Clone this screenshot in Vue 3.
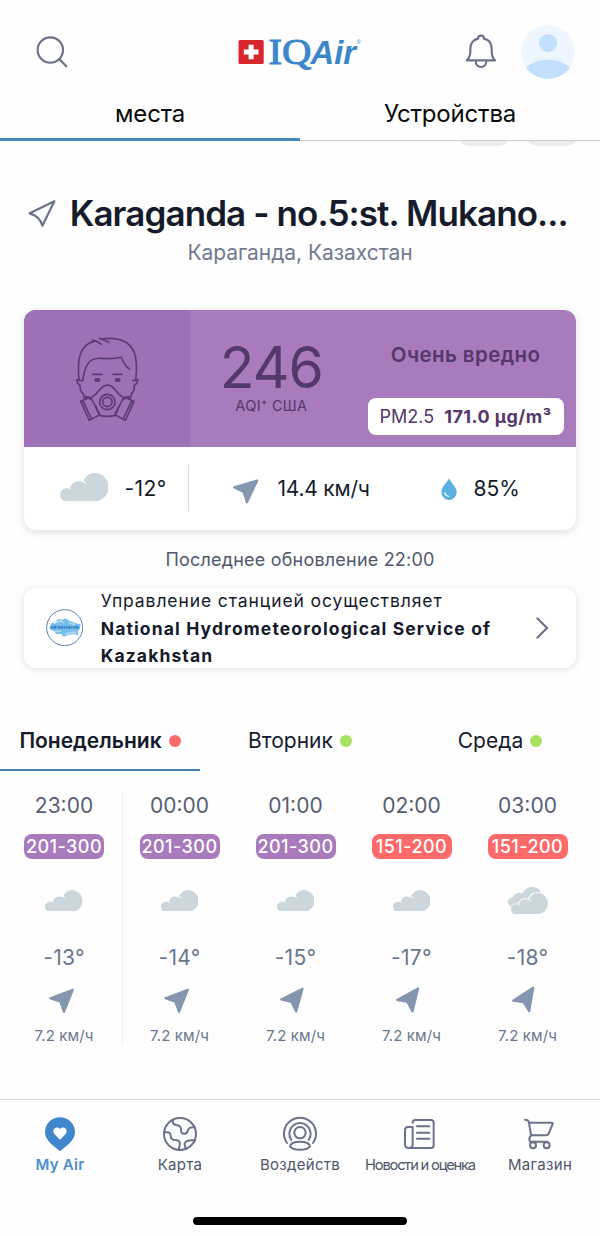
<script setup>
import { ref } from 'vue';

const cloudPath = 'M6.5 28.3C2.8 28.3 0 25.5 0 21.8C0 18 3 15.3 6.6 15.3C8.5 15.3 10 16 11.5 17.5C11.3 16.5 10.7 15.8 9.9 15C11.5 10.8 14.6 8.3 18.5 8.3C22 8.3 24.5 9.6 27 12C26.6 10.2 25.3 8.8 23.5 7.7C25.8 2.8 30 0 34.6 0C42.4 0 48.6 6.3 48.6 14.2C48.6 22 42.4 28.3 34.6 28.3Z';

const activeDay = ref(0);

const days = [
  { name: 'Понедельник', level: 'red' },
  { name: 'Вторник', level: 'green' },
  { name: 'Среда', level: 'green' },
];

const hours = [
  { time: '23:00', aqi: '201-300', level: 'purple', sky: 'cloud', temp: '-13°', wind: '7.2 км/ч', angle: 0 },
  { time: '00:00', aqi: '201-300', level: 'purple', sky: 'cloud', temp: '-14°', wind: '7.2 км/ч', angle: 0 },
  { time: '01:00', aqi: '201-300', level: 'purple', sky: 'cloud', temp: '-15°', wind: '7.2 км/ч', angle: -6 },
  { time: '02:00', aqi: '151-200', level: 'red', sky: 'cloud', temp: '-17°', wind: '7.2 км/ч', angle: -8 },
  { time: '03:00', aqi: '151-200', level: 'red', sky: 'cloudy', temp: '-18°', wind: '7.2 км/ч', angle: -12 },
];
</script>

<template>
  <div class="screen">
    <header class="header">
      <svg class="search" viewBox="108 108 96 96">
        <circle cx="151" cy="150" r="38" />
        <path d="M178 178L199 199" />
      </svg>
      <svg class="logo" viewBox="0 0 126 42">
        <rect x="0.5" y="4" width="25.2" height="24" rx="1.5" fill="#d9272e" />
        <path d="M13.1 8.7V23.3M5.8 16H20.5" stroke="#fff" stroke-width="5" />
        <text class="logo-iq" x="30.5" y="28" textLength="43" lengthAdjust="spacingAndGlyphs">IQ</text>
        <text class="logo-air" x="72.5" y="28" textLength="45.5" lengthAdjust="spacingAndGlyphs">Air</text>
        <text class="logo-reg" x="118.5" y="8">®</text>
      </svg>
      <svg class="bell" viewBox="495 102 96 108">
        <path d="M500 181C509 174 511 166 511 152V146C511 130 521 119 534 116C534 104 552 104 552 116C566 119 575 130 575 146V152C575 166 577 174 585 181ZM527 183C527 207 559 207 559 183" />
      </svg>
      <svg class="avatar" viewBox="0 0 54 54">
        <circle cx="27" cy="27" r="27" fill="#edf6ff" />
        <circle cx="27" cy="18" r="9" fill="#c2e0fc" />
        <path d="M5 42.5C11 37.5 18.5 34.5 27 34.5S43 37.5 49 42.5A27 27 0 0 1 5 42.5Z" fill="#c2e0fc" />
      </svg>
    </header>

    <nav class="tabs">
      <div class="tab tab-active"><span>места</span></div>
      <div class="tab"><span>Устройства</span></div>
    </nav>

    <div class="chips"><i></i><i></i></div>

    <section class="place">
      <h1>
        <svg viewBox="86 56 86 86"><path d="M91 99L165 63L129 136C124 117 112 105 91 99Z" /></svg>
        <span>Karaganda - no.5:st. Mukano...</span>
      </h1>
      <p>Караганда, Казахстан</p>
    </section>

    <section class="card">
      <div class="aqi">
        <div class="face">
          <svg viewBox="161 105 200 265">
            <path d="M187 279C180 277 179 266 179 256C172 252 169 246 170 239C176 241 180 242 185 242M335 279C342 277 342 266 342 256C349 252 353 246 352 239C346 241 343 242 338 242" />
            <path d="M176 240C174 221 173 202 176 181C180 151 197 128 223 124L217 120C230 123 236 126 243 133M237 115C245 118 255 122 265 127M241 117C260 116 266 114 280 116C312 119 337 136 345 168C350 192 349 217 346 240" />
            <path d="M187 242C190 221 194 206 201 194C210 178 225 174 242 175C263 177 284 177 303 171C308 188 316 199 327 207" />
            <path d="M187 279C190 284 191 289 191 293M335 279C332 284 331 289 331 293" />
            <path d="M217 223H245M278 223H305" />
            <ellipse class="eye" cx="231" cy="240" rx="9" ry="6" />
            <ellipse class="eye" cx="292" cy="240" rx="9" ry="6" />
            <path d="M213 293C226 286 233 276 239 268C253 251 270 251 283 268C289 276 297 286 309 293M239 347C253 350 269 350 283 347M227 320C230 334 235 342 239 347M295 320C292 334 287 342 283 347" />
            <circle cx="261" cy="306" r="23" />
            <circle cx="261" cy="306" r="14" />
            <path d="M181 304L211 292L239 344L207 361ZM187 301L213 356M194 296L196 290L213 294L210 298M341 304L311 292L283 344L315 361ZM335 301L309 356M328 296L326 290L309 294L312 298" />
          </svg>
        </div>
        <div class="value">
          <strong>246</strong>
          <span>AQI⁺ США</span>
        </div>
        <div class="status">
          <div class="verdict">Очень вредно</div>
          <div class="pm"><span>PM2.5</span><b>171.0 µg/m³</b></div>
        </div>
      </div>
      <div class="weather">
        <div class="temp">
          <svg class="cloud-big" viewBox="0 0 48.6 28.3"><path :d="cloudPath" /></svg>
          <span>-12°</span>
        </div>
        <div class="wind">
          <svg class="arrow" viewBox="0 0 26 25"><path d="M24.3 1.5L1.2 8.3L10.5 13L14 23.3Z" /></svg>
          <span>14.4 км/ч</span>
        </div>
        <div class="humidity">
          <svg class="drop" viewBox="0 0 16 22">
            <path d="M8 0C6.5 4.5 0.3 8.5 0.3 14.3A7.7 7.7 0 0 0 15.7 14.3C15.7 8.5 9.5 4.5 8 0Z" fill="#5cb0df" />
            <path d="M3.8 14.5C4.1 16.8 5.3 18 7.6 18.3" fill="none" stroke="#fff" stroke-width="1.2" stroke-linecap="round" />
          </svg>
          <span>85%</span>
        </div>
      </div>
    </section>

    <p class="updated">Последнее обновление 22:00</p>

    <section class="station">
      <svg class="emblem" viewBox="137 207 112 112">
        <circle cx="193" cy="263" r="54" fill="#fff" stroke="#5a7fb5" stroke-width="3" />
        <path d="M148 259L157 247L164 252L172 237L187 239L196 235L207 242L217 246L227 250L241 253L239 266L232 275L234 286L219 282L205 284L190 290L181 281L168 283L162 274L150 269Z" fill="#74bdeb" />
        <path d="M165 248L180 243L190 248M204 249L224 254M163 275L182 273M195 282L216 277L228 278" stroke="#b0dcf3" stroke-width="5" fill="none" />
        <path d="M152 262H236" stroke="#2c7bbb" stroke-width="7" stroke-dasharray="5 2 8 2 3 2" />
      </svg>
      <div class="station-text">
        <span>Управление станцией осуществляет</span>
        <b>National Hydrometeorological Service of Kazakhstan</b>
      </div>
      <svg class="chevron" viewBox="0 0 13 22"><path d="M1.5 1.5L11 11L1.5 20.5" /></svg>
    </section>

    <nav class="days">
      <div
        v-for="(day, i) in days"
        :key="day.name"
        class="day"
        :class="{ 'day-active': i === activeDay }"
        @click="activeDay = i"
      >
        <span>{{ day.name }}</span><i :class="day.level"></i>
      </div>
    </nav>

    <section class="hours">
      <div v-for="hour in hours" :key="hour.time" class="hour">
        <div class="time">{{ hour.time }}</div>
        <div class="badge" :class="hour.level"><span>{{ hour.aqi }}</span></div>
        <div class="sky">
          <svg v-if="hour.sky === 'cloud'" class="cloud" viewBox="0 0 48.6 28.3"><path :d="cloudPath" /></svg>
          <svg v-else class="cloudy" viewBox="0 0 40 27">
            <path d="M4 20C1.3 19 0 17 0 14.8C0 12.2 2 10.4 4.8 10.2C6 7.6 8.3 6 11 6C12.3 6 13.4 6.2 14.4 6.6C16.3 2.5 20 0 24.4 0C28 0 31 1.6 33 4.5L30 14L10 20Z" />
            <path class="front" transform="translate(3 6) scale(0.76 0.742)" :d="cloudPath" />
          </svg>
        </div>
        <div class="degrees">{{ hour.temp }}</div>
        <svg class="arrow" viewBox="0 0 26 26" :style="{ transform: `rotate(${hour.angle}deg)` }">
          <path d="M23.8 1.8L1.4 10.2L11.4 13.8L15 23.9Z" />
        </svg>
        <div class="speed">{{ hour.wind }}</div>
      </div>
    </section>

    <footer class="bottom">
      <div class="item item-active">
        <svg viewBox="126 77 108 108">
          <path class="pin" d="M180 81C154 81 135 101 135 126C135 150 162 168 180 183C198 168 225 150 225 126C225 101 206 81 180 81Z" />
          <path class="heart" d="M180 148L163 131C153 119 169 104 180 116C191 104 207 119 197 131Z" />
        </svg>
        <span>My Air</span>
      </div>
      <div class="item">
        <svg viewBox="485 77 108 108">
          <circle cx="539" cy="131" r="48" />
          <path d="M518 89C516 97 519 103 528 104C540 105 542 110 542 119C542 134 560 134 563 120C565 110 573 110 583 111M492 126C505 124 511 127 511 136C511 145 516 149 527 149C538 150 540 157 538 165L535 178M584 150C572 149 555 149 553 160C552 167 556 169 556 176" />
        </svg>
        <span>Карта</span>
      </div>
      <div class="item">
        <svg viewBox="-54 77 108 108">
          <path d="M-39 158A48 48 0 1 1 39 158M-26 149A32 32 0 1 1 26 149" />
          <circle cx="0" cy="127" r="17" />
          <path d="M-30 168C-28 157 -14 154 0 154S28 157 30 168C18 182 -18 182 -30 168Z" />
        </svg>
        <span>Воздейств</span>
      </div>
      <div class="item item-news">
        <svg viewBox="306 77 108 108">
          <path d="M338 97Q338 89 346 89H393Q401 89 401 97V165Q401 173 393 173H326Q315 173 315 162V119Q315 110 324 110H338V161Q338 173 327 173M351 108H388M351 127H388M351 145H388" />
        </svg>
        <span>Новости и оценка</span>
      </div>
      <div class="item">
        <svg viewBox="666 77 108 108">
          <path d="M675 88Q686 88 687 97L693 135H739Q744 135 746 130L758 101Q759 97 754 97H687M693 135Q684 146 691 154H742" />
          <circle cx="699" cy="165" r="9" />
          <circle cx="740" cy="165" r="9" />
        </svg>
        <span>Магазин</span>
      </div>
    </footer>
    <div class="home"></div>
  </div>
</template>

<style>
body {
  margin: 0;
  background: #fefefe;
}
</style>

<style scoped>
.screen {
  width: 600px;
  height: 1236px;
  display: flex;
  flex-direction: column;
  overflow: hidden;
  background: #fefefe;
  color: #151b2b;
  font-family: Inter, "Liberation Sans", sans-serif;
  white-space: nowrap;
}

svg {
  display: block;
  flex: none;
}

p, h1 {
  margin: 0;
}

.header {
  height: 92px;
  display: flex;
  align-items: flex-start;
  flex: none;
}

.search {
  width: 32px;
  height: 32px;
  margin: 36px 0 0 36px;
  fill: none;
  stroke: #6b7289;
  stroke-width: 6.5;
  stroke-linecap: round;
}

.logo {
  width: 126px;
  height: 42px;
  margin: 36px 0 0 170px;
  overflow: visible;
  fill: #3c87ca;
}

.logo-iq {
  font: 36.5px "Liberation Serif", serif;
  stroke: #3c87ca;
  stroke-width: 1;
}

.logo-air {
  font: italic bold 34px "Liberation Sans", sans-serif;
}

.logo-reg {
  font: 6px "Liberation Sans", sans-serif;
}

.bell {
  width: 32px;
  height: 36px;
  margin: 34px 0 0 101px;
  fill: none;
  stroke: #6b7289;
  stroke-width: 6.5;
  stroke-linejoin: round;
}

.avatar {
  width: 54px;
  height: 54px;
  margin: 25px 0 0 24px;
}

.tabs {
  height: 49px;
  display: flex;
  flex: none;
}

.tab {
  flex: 1;
  box-sizing: border-box;
  border-bottom: 1px solid #cdced2;
  text-align: center;
  font-size: 24px;
  line-height: 44px;
  letter-spacing: -0.2px;
  color: #0a0a0a;
}

.tab-active {
  border-bottom: 3px solid #4287c2;
}

.chips {
  height: 5px;
  display: flex;
  justify-content: flex-end;
  gap: 20px;
  padding-right: 24px;
  flex: none;
}

.chips i {
  width: 48px;
  background: #ebebef;
  border-radius: 0 0 14px 14px / 0 0 5px 5px;
}

.place {
  height: 164px;
  flex: none;
  padding-left: 28px;
  box-sizing: border-box;
}

h1 {
  display: flex;
  align-items: center;
  gap: 13px;
  padding-top: 46px;
  font-size: 35px;
  line-height: 42px;
  font-weight: 600;
  letter-spacing: -0.9px;
}

h1 svg {
  width: 28.7px;
  height: 28.7px;
  fill: none;
  stroke: #6b7289;
  stroke-width: 6.5;
  stroke-linejoin: round;
}

.place p {
  margin-left: -28px;
  text-align: center;
  font-size: 21px;
  line-height: 37px;
  letter-spacing: -0.05px;
  color: #717a8f;
}

.card {
  height: 219.5px;
  margin: 0 24.4px;
  border-radius: 12px;
  overflow: hidden;
  flex: none;
  background: #fff;
  box-shadow: 0 2px 8px rgba(0, 0, 0, 0.13);
}

.aqi {
  height: 137px;
  display: flex;
  background: #a97abc;
  color: #55386a;
}

.face {
  width: 165.5px;
  display: flex;
  align-items: center;
  justify-content: center;
  background: #a070b6;
}

.face svg {
  width: 66.7px;
  height: 88.3px;
  margin-top: 2px;
  fill: none;
  stroke: #5d3a72;
  stroke-width: 5;
  stroke-linecap: round;
  stroke-linejoin: round;
}

.face .eye {
  fill: #5d3a72;
  stroke: none;
}

.value {
  width: 163px;
  display: flex;
  flex-direction: column;
  align-items: center;
}

.value strong {
  margin-top: 28px;
  font-size: 57px;
  line-height: 60px;
  font-weight: 400;
  letter-spacing: -1px;
}

.value span {
  margin-top: -1px;
  font-size: 14.5px;
  line-height: 17px;
  letter-spacing: 0.35px;
}

.status {
  flex: 1;
  display: flex;
  flex-direction: column;
  align-items: flex-end;
  padding-right: 12px;
}

.verdict {
  width: 196px;
  margin-top: 30px;
  text-align: center;
  font-size: 20.5px;
  line-height: 30px;
  letter-spacing: 0.4px;
  font-weight: 600;
}

.pm {
  width: 196px;
  height: 37px;
  margin-top: 28px;
  display: flex;
  align-items: center;
  justify-content: center;
  gap: 10px;
  border-radius: 8px;
  background: #fff;
  font-size: 18px;
}

.pm b {
  letter-spacing: 0.45px;
}

.weather {
  height: 82.5px;
  display: flex;
  align-items: center;
  font-size: 21px;
}

.temp {
  width: 163.5px;
  height: 46px;
  display: flex;
  align-items: center;
  border-right: 1.5px solid #d9dade;
}

.temp span {
  letter-spacing: 0.4px;
}

.cloud-big {
  width: 48.6px;
  height: 28.3px;
  margin: -3px 16px 0 35.5px;
  fill: #cbd6dd;
}

.wind {
  width: 249px;
  display: flex;
  align-items: center;
}

.wind span {
  letter-spacing: -0.2px;
}

.arrow {
  width: 26px;
  height: 26px;
  fill: #8496b0;
  stroke: #8496b0;
  stroke-width: 2.2;
  stroke-linejoin: round;
}

.wind .arrow {
  height: 25px;
  margin: 6px 18.5px 0 44px;
}

.humidity {
  display: flex;
  align-items: center;
}

.drop {
  width: 16px;
  height: 22px;
  margin: 1px 16.5px 0 3px;
}

.updated {
  height: 58.5px;
  flex: none;
  text-align: center;
  font-size: 18px;
  line-height: 59px;
  letter-spacing: 0.2px;
  color: #50586b;
}

.station {
  height: 79.5px;
  margin: 0 24.4px;
  display: flex;
  align-items: center;
  flex: none;
  border-radius: 12px;
  background: #fff;
  box-shadow: 0 1px 7px rgba(0, 0, 0, 0.13);
}

.emblem {
  width: 37.3px;
  height: 37.3px;
  margin-left: 21.5px;
}

.station-text {
  width: 430px;
  margin-left: 17.5px;
  padding-top: 1.5px;
  display: flex;
  flex-direction: column;
  font-size: 17.5px;
  line-height: 27.5px;
  letter-spacing: 0.9px;
  white-space: normal;
}

.station-text b {
  font-weight: 700;
  letter-spacing: 1.13px;
}

.chevron {
  width: 13px;
  height: 22px;
  margin-left: 5px;
  fill: none;
  stroke: #6b7289;
  stroke-width: 2.2;
  stroke-linecap: round;
}

.days {
  height: 61px;
  margin-top: 42.5px;
  display: flex;
  flex: none;
}

.day {
  flex: 1;
  box-sizing: border-box;
  display: flex;
  align-items: center;
  justify-content: center;
  gap: 7px;
  height: 61px;
  padding-top: 2px;
  border-bottom: 2px solid transparent;
  font-size: 21px;
}

.day-active {
  border-color: #467eaf;
  font-weight: 600;
}

.day i {
  width: 12px;
  height: 12px;
  border-radius: 50%;
}

.red {
  background: #fe6a69;
}

.green {
  background: #a8e05f;
}

.purple {
  background: #a97abc;
}

.hours {
  height: 328px;
  padding: 22px 14px 0 6px;
  box-sizing: border-box;
  display: flex;
  flex: none;
}

.hour {
  width: 116px;
  height: 251px;
  display: flex;
  flex-direction: column;
  align-items: center;
}

.hour > * {
  flex: none;
}

.hour:first-child {
  border-right: 1.5px solid #efeff2;
  margin-right: -1.5px;
}

.time {
  font-size: 21px;
  line-height: 26px;
  color: #565e70;
}

.badge {
  width: 80px;
  height: 24.5px;
  margin-top: 15px;
  border-radius: 8px;
  text-align: center;
  font-size: 18px;
  line-height: 25px;
  font-weight: 500;
  letter-spacing: 0.45px;
  color: #fff;
}

.sky {
  height: 84px;
  display: flex;
  align-items: center;
  fill: #cbd6dd;
}

.cloud {
  width: 37.5px;
  height: 21.8px;
}

.cloudy {
  width: 40px;
  height: 27px;
}

.front {
  stroke: #fefefe;
  stroke-width: 2.6;
  paint-order: stroke;
}

.degrees {
  font-size: 21px;
  line-height: 30px;
  letter-spacing: 0.3px;
  color: #68778d;
}

.hour .arrow {
  margin: 15px 0 0 -5px;
}

.speed {
  margin-top: 12px;
  font-size: 15px;
  line-height: 20px;
  letter-spacing: 0.1px;
  color: #68778d;
}

.bottom {
  height: 118px;
  display: flex;
  flex: none;
  box-sizing: border-box;
  border-top: 1px solid #d4d6da;
}

.item {
  width: 120px;
  display: flex;
  flex-direction: column;
  align-items: center;
  font-size: 15px;
  line-height: 20px;
  letter-spacing: 0.3px;
  color: #4e5669;
}

.item svg {
  width: 36px;
  height: 36px;
  margin: 16px 0 3px;
  fill: none;
  stroke: #6b7289;
  stroke-width: 6;
  stroke-linecap: round;
  stroke-linejoin: round;
}

.item-active {
  color: #4a90d0;
  font-weight: 600;
}

.item .pin {
  fill: #3f86cc;
  stroke: none;
}

.item .heart {
  fill: #fff;
  stroke: none;
}

.item-news {
  font-size: 14.7px;
  letter-spacing: -1.2px;
}

.home {
  width: 214px;
  height: 7.5px;
  margin: 0 auto;
  flex: none;
  border-radius: 4px;
  background: #000;
}
</style>
